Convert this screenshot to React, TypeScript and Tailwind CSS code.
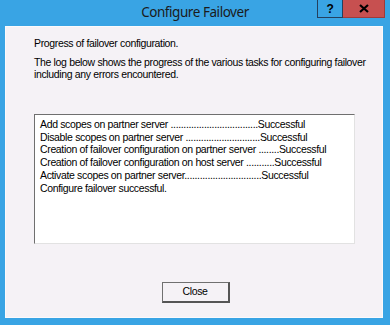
import React from 'react';

const font = { fontFamily: '"Liberation Sans", Arial, sans-serif', letterSpacing: '-0.35px' };

const logLines = [
  'Add scopes on partner server ' + '.'.repeat(34) + 'Successful',
  'Disable scopes on partner server ' + '.'.repeat(29) + 'Successful',
  'Creation of failover configuration on partner server ' + '.'.repeat(8) + 'Successful',
  'Creation of failover configuration on host server ' + '.'.repeat(11) + 'Successful',
  'Activate scopes on partner server' + '.'.repeat(30) + 'Successful',
  'Configure failover successful.',
];

const App = () => {
  return (
    <div className="w-[390px] h-[325px] bg-[#39a4e4] flex flex-col overflow-hidden">
      {/* title bar */}
      <div className="relative h-[26px] shrink-0 flex items-center justify-center">
        <span
          className="text-[13.5px] text-[#1b1b1b] pb-[2px] tracking-[-0.45px]"
          style={{ fontFamily: '"Noto Sans", "Open Sans", sans-serif' }}
        >
          Configure Failover
        </span>
        <div className="absolute top-0 right-[5px] flex h-[18px]">
          <div className="w-[26px] h-full border border-[#24405e] border-t-0 flex items-center justify-center text-[12px] font-bold text-black" style={font}>
            ?
          </div>
          <div className="w-[42px] h-full bg-[#c75050] border border-[#9e3b3b] border-t-0 border-l-0 flex items-center justify-center">
            <svg width="10" height="9" viewBox="0 0 10 9">
              <path d="M1 1 L9 8 M9 1 L1 8" stroke="#000" strokeWidth="2.2" />
            </svg>
          </div>
        </div>
      </div>

      {/* client area */}
      <div
        className="ml-[5px] mr-[7px] h-[292px] bg-[#f5f2f6] border border-[#fbfafc] flex flex-col pl-[28px] pt-[10px] text-[10.5px] text-black"
        style={font}
      >
        <p className="leading-[12px]">Progress of failover configuration.</p>
        <p className="leading-[11.5px] mt-[8px] w-[340px]">
          The log below shows the progress of the various tasks for configuring failover including any errors encountered.
        </p>

        <div className="mt-[34px] w-[321px] h-[130px] bg-white border border-t-[#6f6f6f] border-l-[#6f6f6f] border-r-[#e2e2e2] border-b-[#e2e2e2] pl-[5px] pt-[3px]">
          {logLines.map((line) => (
            <div key={line} className="leading-[12.7px] whitespace-pre">
              {line}
            </div>
          ))}
        </div>

        <div className="mt-[38px] w-[321px] flex justify-center">
          <button
            className="ml-[2px] w-[68px] h-[21px] bg-[#f5f2f6] border border-[#707070] border-r-2 border-b-2 border-r-[#555] border-b-[#555] text-[10.5px] text-black flex items-center justify-center"
            style={font}
          >
            Close
          </button>
        </div>
      </div>
    </div>
  );
};

export default App;
